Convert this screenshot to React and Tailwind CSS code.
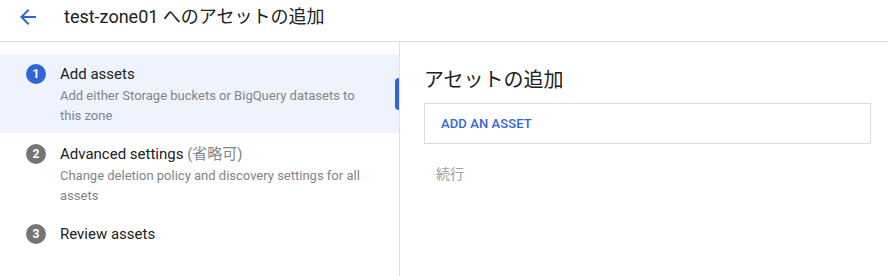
import React from "react";

const latin = { fontFamily: 'Roboto, "Noto Sans CJK JP", sans-serif' };

function Step({ n, title, extra, desc, active }) {
  return (
    <div className={"flex pl-[26px] pb-[7px] " + (active ? "bg-[#eef3fd] pt-[10px]" : "pt-[11px]")}>
      <div
        className={
          "w-5 h-5 rounded-full flex items-center justify-center text-white text-[12px] font-bold shrink-0 " +
          (active ? "bg-[#2f66d5]" : "bg-[#757575]")
        }
      >
        {n}
      </div>
      <div className="ml-[14px] flex-1 pr-6">
        <div className="text-[15px] leading-5 text-[#202124]">
          {title}
          {extra && <span className="text-[#80868b]"> {extra}</span>}
        </div>
        {desc && (
          <div className="mt-[2px] text-[13px] leading-5 text-[#80868b]">{desc}</div>
        )}
      </div>
    </div>
  );
}

export default function App() {
  return (
    <div className="w-[888px] h-[276px] bg-white overflow-hidden" style={latin}>
      <div className="h-[42px] border-b border-[#e0e0e0] flex items-center">
        <svg width="24" height="24" viewBox="0 0 24 24" className="ml-[16px] mt-[-8px]">
          <path d="M20 11H7.83l5.59-5.59L12 4l-8 8 8 8 1.41-1.41L7.83 13H20v-2z" fill="#2f66d5" />
        </svg>
        <div className="ml-[24px] mt-[-8px] text-[18px] text-[#202124]">test-zone01 へのアセットの追加</div>
      </div>
      <div className="flex h-[234px]">
        <div className="w-[400px] border-r border-[#e0e0e0] pt-[12px] relative">
          <Step n="1" active title="Add assets" desc="Add either Storage buckets or BigQuery datasets to this zone" />
          <Step
            n="2"
            title="Advanced settings"
            extra="(省略可)"
            desc="Change deletion policy and discovery settings for all assets"
          />
          <Step n="3" title="Review assets" />
          <div className="absolute right-0 top-[36px] w-1 h-[32px] rounded-l-sm bg-[#2f66d5]"></div>
        </div>
        <div className="flex-1 pl-[24px] pt-[24px]">
          <div className="text-[20px] leading-7 text-[#202124]">アセットの追加</div>
          <div className="mt-[9px] w-[447px] h-[41px] border border-[#dadce0] flex items-center pl-[16px]">
            <span className="text-[13px] font-medium text-[#3367d6] tracking-[0.1px]">ADD AN ASSET</span>
          </div>
          <div className="mt-[20px] ml-[12px] text-[14px] text-[#9e9e9e]">続行</div>
        </div>
      </div>
    </div>
  );
}
